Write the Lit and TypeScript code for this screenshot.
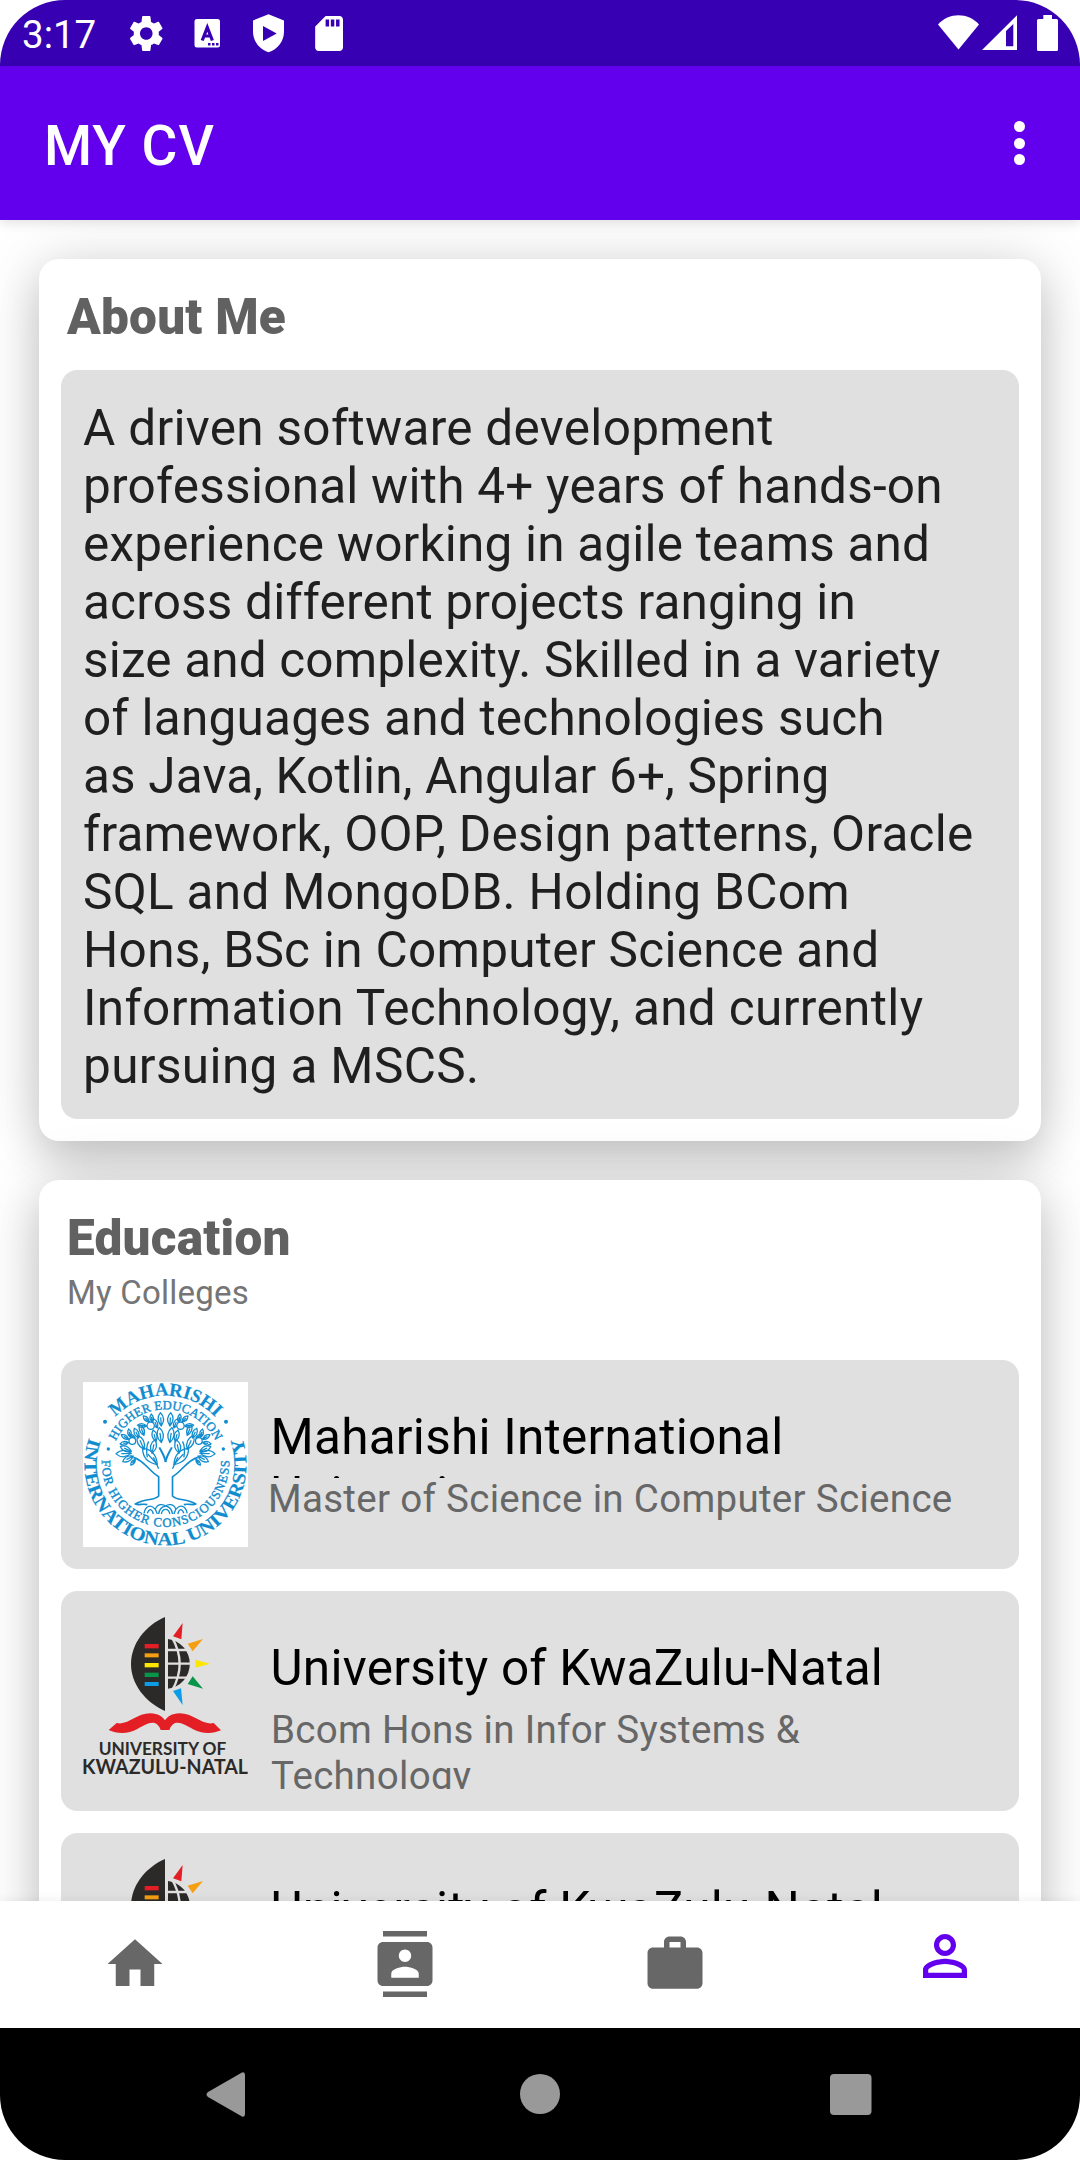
import { LitElement, html, svg, css } from "lit";
import { customElement, property } from "lit/decorators.js";

const leaf = (x: number, y: number, angle: number, len: number) => svg`
  <g transform="translate(${x} ${y}) rotate(${angle})">
    <path d="M0 0C${len * 0.27} ${-len * 0.35} ${len * 0.27} ${-len * 0.7} 0 ${-len}C${-len * 0.27} ${-len * 0.7} ${-len * 0.27} ${-len * 0.35} 0 0ZM0 0V${-len * 0.65}" />
  </g>`;

// Leaves of the left half of the crown: x, y, angle in degrees, length.
const LEAVES: [number, number, number, number][] = [
  [274, 168, -4, 40], [262, 174, -22, 30], [274, 218, -8, 46], [258, 215, -14, 36],
  [238, 156, -45, 26], [246, 156, -5, 24], [230, 168, -85, 28],
  [222, 196, -22, 34], [206, 204, -24, 32], [196, 204, -62, 22],
  [182, 202, -14, 26], [176, 208, -58, 26], [176, 218, -98, 26],
  [184, 244, -66, 36], [184, 250, -92, 46], [190, 258, -118, 36], [196, 268, -142, 22],
  [222, 238, -24, 46], [262, 284, -42, 66], [246, 250, 12, 42],
];

@customElement("miu-logo")
export class MiuLogo extends LitElement {
  static styles = css`
    :host { display: block; width: 165px; height: 165px; background: #fff; }
    svg { display: block; width: 100%; height: 100%; }
    .word { font-family: "Liberation Serif", serif; fill: #118dcf; stroke: #118dcf; }
    .outer { font-size: 56px; stroke-width: 0.5; }
    .inner { font-size: 38px; stroke-width: 1.2; }
  `;
  private half() {
    return svg`
      ${LEAVES.map((l) => leaf(...l))}
      <circle cx="242" cy="167" r="11" fill="#fff" />
      <circle cx="187" cy="213" r="10" fill="#fff" />
      <path d="M287 276C284 258 275 246 268 232" stroke-width="6" />
      <path d="M190 262C222 270 240 306 266 320V378C252 394 228 382 196 402C206 407 218 400 232 404" stroke-width="5" />
      <path d="M266 296L250 262M232 262C228 240 230 225 236 214" stroke-width="4" />
      <path d="M222 430C226 406 244 402 256 418M232 430C238 414 246 416 250 432M256 418C262 400 280 402 287 408M266 432C268 416 276 410 287 408M274 432C276 422 280 418 287 418M256 418L262 432" stroke-width="4" />
    `;
  }
  render() {
    return html`
      <svg viewBox="39 36 495 495" role="img" aria-label="Maharishi International University">
        <defs>
          <path id="top-out" d="M80.500 283A206 206 0 0 1 492.500 283" />
          <path id="bot-out" d="M60.500 193.500A243 243 0 1 0 512.500 193.500" />
          <path id="top-in" d="M121.500 283A165 165 0 0 1 451.500 283" />
          <path id="bot-in" d="M96.500 260A191 191 0 1 0 476.500 260" />
        </defs>
        <text class="word outer" font-weight="bold" text-anchor="middle" textLength="336" lengthAdjust="spacingAndGlyphs"><textPath href="#top-out" startOffset="50%">MAHARISHI</textPath></text>
        <text class="word outer" font-weight="bold" text-anchor="middle" textLength="925" lengthAdjust="spacingAndGlyphs"><textPath href="#bot-out" startOffset="50%">INTERNATIONAL UNIVERSITY</textPath></text>
        <text class="word inner" text-anchor="middle" textLength="374"><textPath href="#top-in" startOffset="50%">HIGHER EDUCATION</textPath></text>
        <text class="word inner" text-anchor="middle" textLength="618"><textPath href="#bot-in" startOffset="50%">FOR HIGHER CONSCIOUSNESS</textPath></text>
        <g fill="#118dcf">
          <circle cx="105" cy="155" r="6" /><circle cx="468" cy="155" r="6" />
          <circle cx="115" cy="237" r="5" /><circle cx="460" cy="237" r="5" />
        </g>
        <g fill="none" stroke="#118dcf" stroke-width="3.8" stroke-linejoin="round">
          <g>${this.half()}</g>
          <g transform="translate(573.500 0) scale(-1 1)">${this.half()}</g>
        </g>
      </svg>`;
  }
}

@customElement("ukzn-logo")
export class UkznLogo extends LitElement {
  static styles = css`
    :host { display: block; width: 165px; height: 176px; }
    svg { display: block; width: 100%; height: 100%; }
    .word { font-family: Lato, sans-serif; font-weight: 700; fill: #2b2a29; }
    .small { font-size: 50px; }
    .big { font-size: 60px; }
  `;
  render() {
    return html`
      <svg viewBox="39 39 495 528" role="img" aria-label="University of KwaZulu-Natal">
        <path fill="#2b2a29" d="M285 51V333C225 306 183 252 183 192S225 77 285 51Z" />
        <path fill="#e31e25" d="M224 132h42v13h-42z" />
        <path fill="#f59e12" d="M224 160h42v12h-42z" />
        <path fill="#ffe600" d="M224 189h42v13h-42z" />
        <path fill="#079547" d="M224 218h42v13h-42z" />
        <path fill="#0c9de6" d="M224 246h42v12h-42z" />
        <path fill="#2b2a29" d="M294 117A74 75 0 0 1 294 266Z" />
        <path fill="none" stroke="#e0e0e0" stroke-width="7" d="M290 150H372M290 191H372M290 233H372M306 112Q352 191 306 272" />
        <path fill="#e31e25" d="M338 69L309 109L334 118Z" />
        <path fill="#f59e12" d="M399 117L353 131L368 154Z" />
        <path fill="#ffe600" d="M420 191L376 179V203Z" />
        <path fill="#079547" d="M399 266L368 229L353 252Z" />
        <path fill="#0c9de6" d="M338 315L309 273L333 265Z" />
        <path fill="#e31e25" d="M116 390L140 369C175 377 198 340 241 340C264 340 278 351 285 361C292 351 305 340 329 340C372 340 395 377 431 369L453 391C428 402 395 402 368 387C345 374 325 361 309 373Q302 379 298 390H272Q268 379 261 373C245 361 225 374 202 387C175 402 142 402 116 390Z" />
        <text class="word small" x="86" y="466" textLength="383" lengthAdjust="spacingAndGlyphs">UNIVERSITY OF</text>
        <text class="word big" x="36" y="521" textLength="498" lengthAdjust="spacingAndGlyphs">KWAZULU-NATAL</text>
      </svg>`;
  }
}

interface College {
  logo: "miu" | "ukzn";
  name: string;
  degree: string;
}

const COLLEGES: College[] = [
  { logo: "miu", name: "Maharishi International University", degree: "Master of Science in Computer Science" },
  { logo: "ukzn", name: "University of KwaZulu-Natal", degree: "Bcom Hons in Infor Systems & Technology" },
  { logo: "ukzn", name: "University of KwaZulu-Natal", degree: "BSc in Computer Science" },
];

@customElement("college-row")
export class CollegeRow extends LitElement {
  static styles = css`
    :host { display: block; }
    .row { display: flex; gap: 22.5px; padding: 22px; border-radius: 16.5px; background: #e0e0e0; }
    .text { flex: 1; min-width: 0; padding-top: 26px; }
    .miu { height: 165px; }
    .ukzn { height: 176px; }
    .name { height: 70px; overflow: hidden; font-size: 49.5px; line-height: 58px; color: #000; letter-spacing: 0.25px; }
    .degree { margin: -2px 0 0 0.5px; overflow: hidden; font-size: 38.5px; line-height: 45.5px; color: #676767; letter-spacing: 0.31px; }
    .miu .degree { margin-left: -2.5px; white-space: nowrap; }
    .ukzn .degree { height: 82px; width: 560px; }
  `;
  @property({ attribute: false }) college!: College;
  render() {
    const c = this.college;
    return html`
      <div class="row ${c.logo}">
        ${c.logo === "miu" ? html`<miu-logo></miu-logo>` : html`<ukzn-logo></ukzn-logo>`}
        <div class="text">
          <div class="name">${c.name}</div>
          <div class="degree">${c.degree}</div>
        </div>
      </div>`;
  }
}

// Each line with its tracking in pixels.
const ABOUT: [string, number][] = [
  ["A driven software development", 0.3],
  ["professional with 4+ years of hands-on", 0.23],
  ["experience working in agile teams and", 0.19],
  ["across different projects ranging in", 0.19],
  ["size and complexity. Skilled in a variety", 0.17],
  ["of languages and technologies such", 0.24],
  ["as Java, Kotlin, Angular 6+, Spring", 0.15],
  ["framework, OOP, Design patterns, Oracle", 0.21],
  ["SQL and MongoDB. Holding BCom", 0.31],
  ["Hons, BSc in Computer Science and", 0.3],
  ["Information Technology, and currently", 0.35],
  ["pursuing a MSCS.", 0.36],
];

const TABS = [
  { label: "Home", active: false, d: "M10 20v-6h4v6h5v-8h3L12 3 2 12h3v8z" },
  { label: "Contact", active: false, d: "M20 0H4v2h16V0zM4 24h16v-2H4v2zM20 4H4c-1.1 0-2 .9-2 2v12c0 1.1.9 2 2 2h16c1.1 0 2-.9 2-2V6c0-1.1-.9-2-2-2zm-8 2.750c1.240 0 2.250 1.010 2.250 2.250s-1.010 2.250-2.250 2.250S9.750 10.240 9.750 9 10.760 6.750 12 6.750zM17 17H7v-1.500c0-1.670 3.330-2.500 5-2.500s5 .830 5 2.500V17z" },
  { label: "Work", active: false, d: "M20 6h-4V4c0-1.110-.890-2-2-2h-4c-1.110 0-2 .890-2 2v2H4c-1.110 0-1.990.890-1.990 2L2 19c0 1.110.890 2 2 2h16c1.110 0 2-.890 2-2V8c0-1.110-.890-2-2-2zm-6 0h-4V4h4v2z" },
  { label: "About", active: true, d: "M12 5.900c1.160 0 2.100.940 2.100 2.100s-.940 2.100-2.100 2.100S9.900 9.160 9.900 8s.940-2.100 2.100-2.100m0 9c2.970 0 6.100 1.460 6.100 2.100v1.100H5.900V17c0-.640 3.130-2.100 6.100-2.100M12 4C9.790 4 8 5.790 8 8s1.790 4 4 4 4-1.790 4-4-1.790-4-4-4zm0 9c-2.670 0-8 1.340-8 4v3h16v-3c0-2.660-5.330-4-8-4z" },
];

@customElement("app-root")
export class AppRoot extends LitElement {
  static styles = css`
    :host { display: block; width: 1080px; height: 2160px; background: #fff; font-family: Roboto, sans-serif; }
    .screen { display: flex; flex-direction: column; width: 1080px; height: 2160px; overflow: hidden; border-radius: 65px; background: #fff; }
    .status { display: flex; justify-content: space-between; height: 66px; flex: none; background: #3700b3; color: #fff; }
    .status-left { display: flex; }
    .time { width: 98px; padding-left: 22px; font-size: 38.5px; line-height: 69px; }
    .status-left svg, .status-right svg { display: block; fill: #fff; }
    .appbar { position: relative; z-index: 1; display: flex; align-items: center; justify-content: space-between; height: 154px; flex: none; box-sizing: border-box; padding: 6px 50px 0 44px; background: #6200ee; color: #fff; box-shadow: 0 3px 11px rgba(0, 0, 0, 0.12); }
    .title { font-size: 55px; line-height: 64px; font-weight: 500; letter-spacing: 1px; }
    .more { display: flex; flex-direction: column; gap: 5.5px; padding: 0 5.5px 6px 0; }
    .more i { width: 11px; height: 11px; border-radius: 50%; background: #fff; }
    .content { flex: 1; min-height: 0; overflow: hidden; display: flex; flex-direction: column; gap: 39px; padding: 39px; }
    .card { flex: none; border-radius: 20px; padding: 29px 22px 22px; background: #fff; box-shadow: 0 19px 42px rgba(0, 0, 0, 0.16), 0 4px 66px rgba(0, 0, 0, 0.14); }
    .heading { padding-left: 6px; font-size: 49.5px; line-height: 58px; font-weight: 900; color: #616161; letter-spacing: 0.25px; }
    .sub { padding: 6px 0 0 6px; font-size: 33px; line-height: 39px; color: #757575; letter-spacing: 0.23px; }
    .about { margin-top: 24px; height: 749px; box-sizing: border-box; padding: 29px 22px 0; border-radius: 16.5px; background: #e0e0e0; font-size: 49.5px; line-height: 58px; color: #1f1f1f; white-space: nowrap; }
    .rows { display: flex; flex-direction: column; gap: 22px; margin-top: 48px; }
    .tabs { position: relative; z-index: 1; display: flex; height: 127px; flex: none; background: #fff; box-shadow: 0 0 10px rgba(0, 0, 0, 0.08); }
    .tab { flex: 1; display: flex; justify-content: center; padding-top: 30px; }
    .tab svg { width: 66px; height: 66px; fill: #676767; }
    .tab.active { padding-top: 22px; }
    .tab.active svg { fill: #6200ee; }
    .system { flex: none; height: 132px; background: #000; }
    .system svg { display: block; fill: #999; }
  `;
  render() {
    return html`
      <div class="screen">
        <div class="status">
          <div class="status-left">
            <div class="time">3:17</div>
            <svg width="240" height="66" viewBox="120 0 240 66">
              <path transform="translate(125.400 12.600) scale(1.740)" fill-rule="evenodd" d="M19.140 12.940c.040-.300.060-.610.060-.940 0-.320-.020-.640-.070-.940l2.030-1.580c.180-.140.230-.410.120-.610l-1.920-3.320c-.120-.220-.370-.290-.590-.220l-2.390.960c-.500-.380-1.030-.700-1.620-.940l-.360-2.940c-.040-.240-.240-.410-.480-.410h-3.840c-.240 0-.430.170-.470.410l-.360 2.940c-.590.240-1.130.570-1.620.940l-2.390-.960c-.220-.080-.470 0-.590.220L2.740 8.870c-.120.210-.080.470.120.610l2.030 1.580c-.050.300-.090.630-.090.940s.020.640.070.940l-2.030 1.580c-.180.140-.230.410-.120.610l1.920 3.320c.120.220.370.290.590.220l2.390-.960c.500.380 1.030.700 1.620.940l.360 2.940c.050.240.240.410.480.410h3.840c.240 0 .440-.170.470-.410l.360-2.940c.590-.240 1.130-.560 1.620-.940l2.390.960c.220.080.470 0 .590-.220l1.920-3.320c.120-.220.070-.470-.120-.610zM12 15.600c-1.980 0-3.600-1.620-3.600-3.600s1.620-3.600 3.600-3.600 3.600 1.620 3.600 3.600-1.620 3.600-3.600 3.600z" />
              <rect x="194.500" y="19" width="25.500" height="28.500" rx="2.500" />
              <path fill="none" stroke="#3700b3" stroke-width="3.200" d="M202.200 40.500L207.300 27.500L212.400 40.500M204 36H210.600" />
              <path fill="#3700b3" d="M208 43h2.500v2.500h-2.500zM212 43h2.500v2.500h-2.500zM216 43h2.500v2.500h-2.500z" />
              <path fill-rule="evenodd" d="M268.500 14.300L284 20.500V31.500C284 41.500 277.500 49.500 268.500 52.300C259.500 49.500 253 41.500 253 31.500V20.500ZM263 26V41L276.700 33.500Z" />
              <path transform="translate(308.200 12.600) scale(1.740)" d="M18 2h-8L4.020 8 4 20c0 1.100.900 2 2 2h12c1.100 0 2-.900 2-2V4c0-1.100-.900-2-2-2zm-6 6h-2V4h2v4zm3 0h-2V4h2v4zm3 0h-2V4h2v4z" />
            </svg>
          </div>
          <div class="status-right">
            <svg width="150" height="66" viewBox="930 0 150 66">
              <path d="M938 24.500C949 12.300 968 12.300 979 24.500L958.500 49.500Z" />
              <path fill-rule="evenodd" d="M982 50L1017 15.300V50ZM1006 31V46.300H1013.300V24Z" />
              <path d="M1043.300 15h8.700v4h4.500q1.500 0 1.500 1.500v29q0 1.500-1.500 1.500h-18q-1.500 0-1.500-1.500v-29q0-1.500 1.500-1.500h4.800z" />
            </svg>
          </div>
        </div>
        <div class="appbar">
          <div class="title">MY CV</div>
          <div class="more"><i></i><i></i><i></i></div>
        </div>
        <div class="content">
          <section class="card">
            <div class="heading">About Me</div>
            <div class="about">${ABOUT.map(([line, tracking]) => html`<div style="letter-spacing:${tracking}px">${line}</div>`)}</div>
          </section>
          <section class="card">
            <div class="heading">Education</div>
            <div class="sub">My Colleges</div>
            <div class="rows">${COLLEGES.map((c) => html`<college-row .college=${c}></college-row>`)}</div>
          </section>
        </div>
        <nav class="tabs">
          ${TABS.map((t) => html`<div class="tab ${t.active ? "active" : ""}"><svg viewBox="0 0 24 24" aria-label=${t.label}><path d=${t.d} /></svg></div>`)}
        </nav>
        <div class="system">
          <svg width="1080" height="132" viewBox="0 2028 1080 132">
            <path d="M242 2072.500Q245 2071.500 245 2075V2114Q245 2117.500 242 2116.500L208 2097Q205 2094.500 208 2092Z" />
            <circle cx="540" cy="2094" r="20" />
            <rect x="830" y="2074" width="41.500" height="41" rx="4" />
          </svg>
        </div>
      </div>`;
  }
}
